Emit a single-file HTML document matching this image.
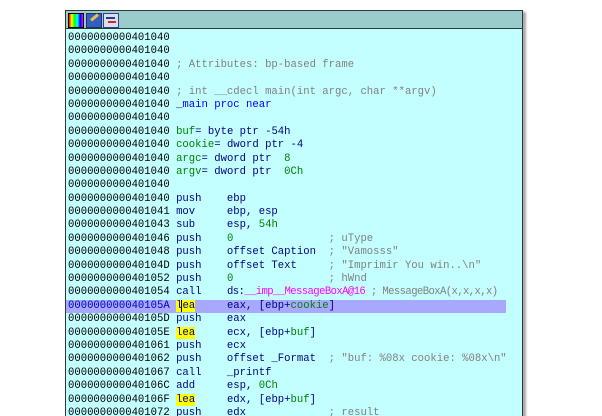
<!DOCTYPE html><html><head><style>
html,body{margin:0;width:602px;height:416px;overflow:hidden}
body{background:#fff;position:relative;font-family:"Liberation Mono",monospace}
.win{position:absolute;left:65px;top:10px;width:456px;height:420px;border:1px solid #2a3a3a;background:#c4ffff;box-shadow:3px 2px 2px #aaa;overflow:hidden}
.tb{height:17px;background:#9ccbcb;border-bottom:1px solid #2a3a3a;position:relative}
.ic{position:absolute;top:2px;width:14px;height:13px}
.code{position:absolute;left:2px;top:21px;font-size:10.6px;line-height:13.4px;color:#000080}
.l{height:13.4px;white-space:pre}
.a{color:#000}
.hl{background:#a8a8ff;width:438px;margin-left:-2px;padding-left:2px}
.hl .a{color:#0000c0}
.c{color:#808080}.b{color:#0000ff}.g{color:#008000}.m{color:#ff00ff}.y{background:#ffff00}
.n{letter-spacing:-0.6px}
</style></head><body>
<div class="win"><div class="tb">
<div class="ic" style="left:2px;background:linear-gradient(90deg,#f00,#ff0,#0f0,#0ff,#00f,#f0f);border:1px solid #000"></div>
<div class="ic" style="left:20px;background:#3060c0;border:1px solid #203060"><div style="position:absolute;left:3px;top:2px;width:9px;height:3px;background:#f0c040;transform:rotate(-40deg)"></div></div>
<div class="ic" style="left:37px;background:#dde;border:1px solid #304090"><div style="position:absolute;left:2px;top:3px;width:9px;height:2px;background:#204080"></div><div style="position:absolute;left:4px;top:7px;width:8px;height:2px;background:#c03030"></div></div>
</div>
<div class="code"><div class="l"><span class="a">0000000000401040</span></div><div class="l"><span class="a">0000000000401040</span></div><div class="l"><span class="a">0000000000401040</span> <span class="c">; Attributes: bp-based frame</span></div><div class="l"><span class="a">0000000000401040</span></div><div class="l"><span class="a">0000000000401040</span> <span class="c">; int __cdecl main(int argc, char **argv)</span></div><div class="l"><span class="a">0000000000401040</span> <span class="b">_main proc near</span></div><div class="l"><span class="a">0000000000401040</span></div><div class="l"><span class="a">0000000000401040</span> <span class="g">buf</span>= byte ptr -54h</div><div class="l"><span class="a">0000000000401040</span> <span class="g">cookie</span>= dword ptr -4</div><div class="l"><span class="a">0000000000401040</span> <span class="g">argc</span>= dword ptr  <span class="g">8</span></div><div class="l"><span class="a">0000000000401040</span> <span class="g">argv</span>= dword ptr  <span class="g">0Ch</span></div><div class="l"><span class="a">0000000000401040</span></div><div class="l"><span class="a">0000000000401040</span> push    ebp</div><div class="l"><span class="a">0000000000401041</span> mov     ebp, esp</div><div class="l"><span class="a">0000000000401043</span> sub     esp, <span class="g">54h</span></div><div class="l"><span class="a">0000000000401046</span> push    <span class="g">0</span>               <span class="c">; uType</span></div><div class="l"><span class="a">0000000000401048</span> push    offset Caption  <span class="c">; "Vamosss"</span></div><div class="l"><span class="a">000000000040104D</span> push    offset Text     <span class="c">; "Imprimir You win..\n"</span></div><div class="l"><span class="a">0000000000401052</span> push    <span class="g">0</span>               <span class="c">; hWnd</span></div><div class="l"><span class="a">0000000000401054</span> call    <span class="n">ds:<span class="m">__imp__MessageBoxA@16</span> <span class="c">; MessageBoxA(x,x,x,x)</span></span></div><div class="l hl"><span class="a">000000000040105A</span> <span class="y">l<span style="border-left:1px solid #000;margin-left:-1px">ea</span></span>     eax, [ebp+<span class="g">cookie</span>]</div><div class="l"><span class="a">000000000040105D</span> push    eax</div><div class="l"><span class="a">000000000040105E</span> <span class="y">lea</span>     ecx, [ebp+<span class="g">buf</span>]</div><div class="l"><span class="a">0000000000401061</span> push    ecx</div><div class="l"><span class="a">0000000000401062</span> push    offset _Format  <span class="c">; "buf: %08x cookie: %08x\n"</span></div><div class="l"><span class="a">0000000000401067</span> call    _printf</div><div class="l"><span class="a">000000000040106C</span> add     esp, <span class="g">0Ch</span></div><div class="l"><span class="a">000000000040106F</span> <span class="y">lea</span>     edx, [ebp+<span class="g">buf</span>]</div><div class="l"><span class="a">0000000000401072</span> push    edx             <span class="c">; result</span></div></div></div>
</body></html>
